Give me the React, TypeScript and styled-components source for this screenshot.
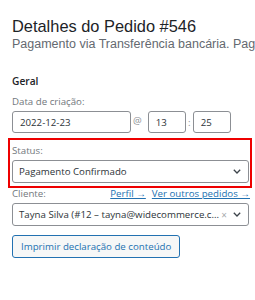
import React from 'react';
import styled, { createGlobalStyle } from 'styled-components';

const GlobalStyle = createGlobalStyle`
  html, body {
    margin: 0;
    padding: 0;
    background: #ffffff;
    overflow: hidden;
  }
`;

const App = () => {
  return (
    <>
      <GlobalStyle />
      <Page>
        <Heading>Detalhes do Pedido #546</Heading>
        <Subtitle>Pagamento via Transferência bancária. Pag</Subtitle>

        <SectionTitle>Geral</SectionTitle>

        <Label>Data de criação:</Label>
        <DateRow>
          <DateInput width={119}>2022-12-23</DateInput>
          <At>@</At>
          <DateInput width={38}>13</DateInput>
          <Colon>:</Colon>
          <DateInput width={38}>25</DateInput>
        </DateRow>

        <StatusField>
          <Label>Status:</Label>
          <Select>
            <SelectText>Pagamento Confirmado</SelectText>
            <Chevron />
          </Select>
        </StatusField>

        <LabelRow>
          <Label>Cliente:</Label>
          <Links>
            <TextLink href="#">Perfil →</TextLink>
            <TextLink href="#">Ver outros pedidos →</TextLink>
          </Links>
        </LabelRow>
        <Select>
          <SelectText>Tayna Silva (#12 – tayna@widecommerce.c...</SelectText>
          <Clear>×</Clear>
          <Chevron />
        </Select>

        <Button>Imprimir declaração de conteúdo</Button>
      </Page>
    </>
  );
};

const Chevron = () => (
  <ChevronIcon width="8" height="5" viewBox="0 0 8 5">
    <path d="M0.8 0.8 L4 4 L7.2 0.8" fill="none" stroke="#3c434a" strokeWidth="1.3" />
  </ChevronIcon>
);

export default App;

const Page = styled.div`
  width: 237px;
  padding: 16px 6px 0 12px;
  display: flex;
  flex-direction: column;
  font-family: 'Open Sans', 'Noto Sans', sans-serif;
  font-size: 9.7px;
  color: #2c3338;
`;

const Heading = styled.h2`
  margin: 0;
  font-family: 'Liberation Sans', Arial, sans-serif;
  font-size: 16.4px;
  font-weight: 400;
  line-height: 20px;
  color: #1d2327;
  white-space: nowrap;
`;

const Subtitle = styled.p`
  margin: 0;
  font-family: 'Liberation Sans', Arial, sans-serif;
  font-size: 12.5px;
  line-height: 16px;
  color: #646970;
  white-space: nowrap;
`;

const SectionTitle = styled.h3`
  margin: 22px 0 7px 0;
  font-size: 10.2px;
  font-weight: 600;
  line-height: 14px;
  color: #1d2327;
`;

const Label = styled.div`
  line-height: 14px;
  color: #72777c;
`;

const DateRow = styled.div`
  display: flex;
  align-items: center;
  margin-top: 2px;
  margin-bottom: 11px;
`;

const DateInput = styled.div<{ width: number }>`
  box-sizing: border-box;
  width: ${(p) => p.width}px;
  height: 22px;
  padding: 0 7px;
  display: flex;
  align-items: center;
  border: 1px solid #8c8f94;
  border-radius: 3px;
  color: #2c3338;
`;

const At = styled.span`
  margin: -4px 6px 0 2px;
  color: #8c8f94;
`;

const Colon = styled.span`
  width: 7px;
  text-align: center;
  color: #8c8f94;
`;

const StatusField = styled.div`
  position: relative;
  display: flex;
  flex-direction: column;
  gap: 2px;
  margin-bottom: 4px;

  &::after {
    content: '';
    position: absolute;
    top: -6px;
    left: -4px;
    right: -3px;
    bottom: -5px;
    border: 2px solid #ee0000;
    pointer-events: none;
  }
`;

const Select = styled.div`
  box-sizing: border-box;
  height: 23px;
  padding: 0 7px 0 6px;
  display: flex;
  align-items: center;
  border: 1px solid #8c8f94;
  border-radius: 3px;
  background: #ffffff;
  color: #2c3338;
`;

const SelectText = styled.span`
  flex: 1;
  min-width: 0;
  white-space: nowrap;
`;

const Clear = styled.span`
  margin: 0 6px 0 4px;
  color: #a7aaad;
  font-size: 10px;
`;

const ChevronIcon = styled.svg`
  flex-shrink: 0;
  display: block;
`;

const LabelRow = styled.div`
  display: flex;
  justify-content: space-between;
  align-items: baseline;
  margin-bottom: 2px;
`;

const Links = styled.div`
  display: flex;
  gap: 6px;
  margin-right: -1px;
`;

const TextLink = styled.a`
  color: #2271b1;
  text-decoration: underline;
  line-height: 14px;
`;

const Button = styled.button`
  align-self: flex-start;
  box-sizing: border-box;
  height: 23px;
  margin-top: 9px;
  padding: 0 8px;
  border: 1px solid #2271b1;
  border-radius: 3px;
  background: #f6f7f7;
  color: #2271b1;
  font-family: 'Open Sans', 'Noto Sans', sans-serif;
  font-size: 9.7px;
  cursor: pointer;
`;
